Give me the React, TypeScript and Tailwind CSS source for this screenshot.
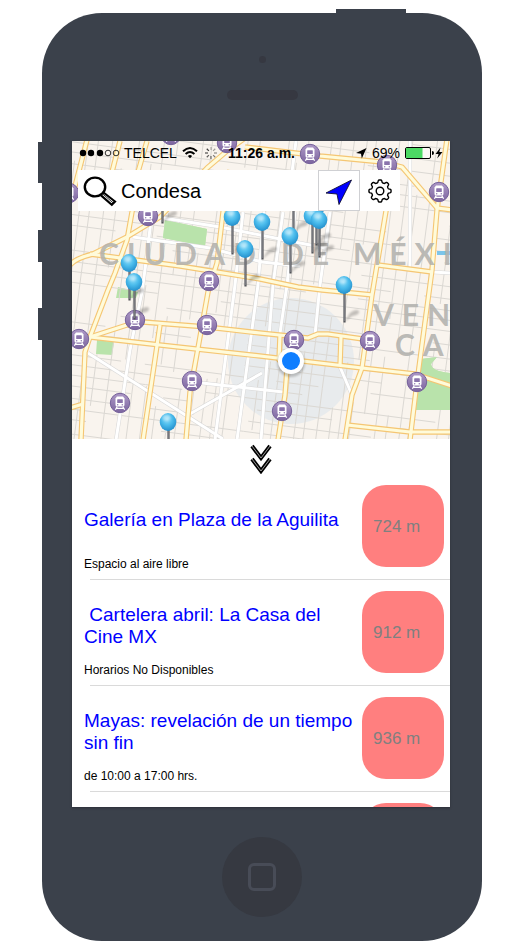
import React from "react";

const MAJOR_ROADS = [
  "M88 136 L74 190",
  "M120 141 L112 172",
  "M147 141 L138 172 L132 212 L127 240 L115 273 L108 290 L90 337 L85 352 L81 440",
  "M70 265 Q76 258 93 254 L127 237 L160 217 L207 168 L227 151 L245 138",
  "M90 254 L143 261 L180 266 L260 279 L298 287 L322 290 L373 295",
  "M230 170 L223 212 L217 263 L208 292 L198 348 L190 392 L186 440",
  "M90 337 L127 325 L143 322 L207 327 L260 333 L308 338 L318 334 L328 334 L370 340",
  "M90 337 L160 345 L260 356 L362 368 L415 374 L452 386",
  "M160 325 L154 366 L143 440",
  "M280 335 L279 360 L287 369 L285 395 L278 440",
  "M387 205 L372 295 L362 368 L352 395 L345 440",
  "M447 139 L437 210 L432 270 L417 382 L410 440",
  "M245 147 L320 156 L382 162 L402 167 L437 208 L452 210",
  "M378 265 L432 272",
  "M347 425 L410 432 L452 432",
  "M341 337 L340 366",
  "M70 408 L83 404",
];

const WHITE_ROADS = [
  "M88 353 L223 439",
  "M262 373 L188 415",
  "M142 292 L130 350 L116 440",
  "M243 212 L235 285 L215 440",
  "M264 212 L258 285 L237 440",
  "M202 383 L283 392",
  "M295 212 L287 285 L279 340",
  "M283 212 L273 285 L261 440",
  "M330 212 L320 285 L315 335",
  "M340 367 L352 395",
  "M410 141 L410 267",
  "M296 141 L292 172",
  "M163 218 L220 227 L300 243 L326 248",
  "M133 237 L210 248 L262 262 L300 266",
  "M152 212 L146 262 L142 292",
  "M432 272 L452 273",
];

const PARKS = [
  "M165 220 L207 229 L205 246 L163 238 Z",
  "M118 287 L138 292 L136 298 L116 298 Z",
  "M97 340 L114 342 L112 355 L96 354 Z",
  "M421 359 L437 357 L431 364 Q432 372 452 373 V410 H416 L420 372 Z",
];

const STATIONS = [
  [171, 135], [227, 143], [310, 154], [387, 165], [439, 192], [69, 193],
  [148, 216], [209, 281], [135, 320], [207, 325], [79, 339], [192, 381],
  [120, 403], [294, 340], [370, 341], [417, 382], [282, 411],
];

const PINS = [
  [162, 186], [293, 196], [316, 208], [232, 217], [262, 222], [290, 236],
  [312, 216], [319, 220], [245, 249], [129, 263], [134, 282], [344, 285],
  [168, 422],
];

const EVENTS = [
  { title: "Galería en Plaza de la Aguilita", detail: "Espacio al aire libre", distance: "724 m" },
  { title: "\u00a0Cartelera abril: La Casa del Cine MX", detail: "Horarios No Disponibles", distance: "912 m" },
  { title: "Mayas: revelación de un tiempo sin fin", detail: "de 10:00 a 17:00 hrs.", distance: "936 m" },
];

/* Side streets: two families of slightly tilted lines, broken at random blocks. */
function buildStreets() {
  let seed = 11;
  const rand = () => {
    seed = (seed * 16807) % 2147483647;
    return seed / 2147483647;
  };
  const parts: string[] = [];
  for (let x = 66; x < 500; x += 9 + rand() * 6) {
    for (let y = 136; y < 440; ) {
      const len = 20 + rand() * 55;
      if (rand() > 0.25) {
        const x1 = x - (y - 140) * 0.13;
        const x2 = x - (y + len - 140) * 0.13;
        parts.push(`M${x1.toFixed(1)} ${y.toFixed(1)} L${x2.toFixed(1)} ${(y + len).toFixed(1)}`);
      }
      y += len;
    }
  }
  for (let y = 90; y < 440; y += 9 + rand() * 6) {
    for (let x = 66; x < 450; ) {
      const len = 20 + rand() * 60;
      if (rand() > 0.26) {
        const y1 = y + (x - 72) * 0.13;
        const y2 = y + (x + len - 72) * 0.13;
        parts.push(`M${x.toFixed(1)} ${y1.toFixed(1)} L${(x + len).toFixed(1)} ${y2.toFixed(1)}`);
      }
      x += len;
    }
  }
  return parts.join(" ");
}

const STREETS = buildStreets();

function buildGear() {
  const points: string[] = [];
  for (let i = 0; i < 160; i++) {
    const a = (i / 160) * Math.PI * 2;
    const r = 9.8 + 1.3 * Math.tanh(2.2 * Math.cos(8 * a));
    points.push(`${(13 + r * Math.sin(a)).toFixed(2)} ${(13 - r * Math.cos(a)).toFixed(2)}`);
  }
  return `M${points.join(" L")} Z`;
}

const GEAR = buildGear();

function Station({ x, y }: { x: number; y: number }) {
  return (
    <g transform={`translate(${x} ${y})`}>
      <circle r="9.7" fill="url(#station)" stroke="#75609a" strokeWidth="1" />
      <path d="M-3 -6.4 H3 L4.5 -4.5 V2 Q4.500 3.6 2.8 3.6 H-2.8 Q-4.500 3.6 -4.5 2 V-4.5 Z" fill="#fff" />
      <rect x="-2.800" y="-3.800" width="5.600" height="3.800" rx="0.6" fill="#8b74ac" />
      <circle cx="-2.3" cy="1.7" r="0.7" fill="#8b74ac" />
      <circle cx="2.3" cy="1.7" r="0.7" fill="#8b74ac" />
      <path d="M-2.800 3.600 L-4.600 6.800 M2.800 3.600 L4.600 6.800 M-3.600 5.300 H3.600" stroke="#fff" strokeWidth="1.2" />
    </g>
  );
}

function Pin({ x, y }: { x: number; y: number }) {
  return (
    <g transform={`translate(${x} ${y})`}>
      <path d="M0.5 37 L6 28 Q12 23 15 26 Q16 30 8 31 Z" fill="#000" opacity="0.22" filter="url(#soft)" />
      <path d="M0.5 7 V37.5" stroke="#55565b" strokeWidth="2.2" />
      <path d="M0.2 8 V36" stroke="#9b9ca2" strokeWidth="0.7" />
      <ellipse rx="8.3" ry="9" fill="url(#ball)" />
      <ellipse cx="-1.6" cy="-4.2" rx="4" ry="3" fill="#fff" opacity="0.4" filter="url(#soft)" />
    </g>
  );
}

function CityMap() {
  return (
    <svg
      className="absolute inset-0 h-full w-full"
      viewBox="72 141 378 298"
      preserveAspectRatio="xMidYMid slice"
      role="img"
      aria-label="Mapa"
    >
      <defs>
        <linearGradient id="station" x1="0" y1="0" x2="0" y2="1">
          <stop offset="0" stopColor="#ad98c6" />
          <stop offset="1" stopColor="#7c659f" />
        </linearGradient>
        <radialGradient id="ball" cx="0.45" cy="0.35" r="0.65">
          <stop offset="0" stopColor="#8fdcf8" />
          <stop offset="0.5" stopColor="#4bbcec" />
          <stop offset="1" stopColor="#2490cd" />
        </radialGradient>
        <filter id="soft" x="-50%" y="-50%" width="200%" height="200%">
          <feGaussianBlur stdDeviation="1" />
        </filter>
      </defs>
      <rect x="60" y="130" width="400" height="320" fill="#f9f4ee" />
      <g fill="#b9e3ab">
        {PARKS.map((d) => (
          <path key={d} d={d} />
        ))}
      </g>
      <circle cx="291" cy="361" r="63" fill="#dfe7ec" opacity="0.65" />
      <path d={STREETS} stroke="#dbd8d3" strokeWidth="1" fill="none" />
      <g fill="#b9e3ab">
        <path d={PARKS[0]} />
        <path d={PARKS[3]} />
      </g>
      <g fill="none" strokeLinejoin="round">
        {WHITE_ROADS.map((d) => (
          <path key={d} d={d} stroke="#d8d8d8" strokeWidth="4" />
        ))}
        {WHITE_ROADS.map((d) => (
          <path key={d} d={d} stroke="#fff" strokeWidth="3" />
        ))}
        {MAJOR_ROADS.map((d) => (
          <path key={d} d={d} stroke="#f5c673" strokeWidth="5.4" />
        ))}
        {MAJOR_ROADS.map((d) => (
          <path key={d} d={d} stroke="#fffbda" strokeWidth="3.2" />
        ))}
      </g>
      <path d="M437 253 H452" stroke="#7cc5ea" strokeWidth="4" fill="none" />
      <g className="font-['Lato','Open_Sans',sans-serif] text-[30px] font-bold" fill="#b3b2ae" fillOpacity="0.9">
        <text x="99" y="265" className="tracking-[8px]">CIUDAD</text>
        <text x="281" y="265" className="tracking-[8px]">DE</text>
        <text x="353" y="265" className="tracking-[8px]">MÉXI</text>
        <text x="373" y="326" className="tracking-[8px]">VEN</text>
        <text x="395" y="356" className="tracking-[8px]">CA</text>
      </g>
      {STATIONS.map(([x, y]) => (
        <Station key={`${x}-${y}`} x={x} y={y} />
      ))}
      {PINS.map(([x, y]) => (
        <Pin key={`${x}-${y}`} x={x} y={y} />
      ))}
      <circle cx="291" cy="363" r="14" fill="#000" opacity="0.2" filter="url(#soft)" />
      <circle cx="291" cy="361" r="13" fill="#fff" />
      <circle cx="291" cy="361" r="9" fill="#0f7eff" />
    </svg>
  );
}

function StatusBar() {
  return (
    <div className="relative flex h-[29px] items-start pt-1 pl-[7px] pr-[6px] text-[14px] leading-4 text-black">
      <div className="flex flex-1 items-center">
        <svg className="h-4 w-[42px]" viewBox="0 0 42 16" aria-hidden="true">
          {[4, 12, 21, 29, 37].map((x, i) => (
            <circle key={x} cx={x} cy="8" r={i < 3 ? 3.2 : 2.8} fill={i < 3 ? "#000" : "none"} stroke="#000" strokeWidth={i < 3 ? 0 : 0.8} />
          ))}
        </svg>
        <span className="ml-[3px]">TELCEL</span>
        <svg className="ml-[5px] h-4 w-4" viewBox="0 0 16 16" fill="none" stroke="#000" strokeWidth="2" aria-hidden="true">
          <path d="M1 6.2 Q8 -0.2 15 6.2" />
          <path d="M3.6 9 Q8 5 12.4 9" />
          <path d="M5.9 10.9 Q8 9.2 10.1 10.9 L8 13.2 Z" fill="#000" stroke="none" />
        </svg>
        <svg className="ml-[6px] h-4 w-[14px]" viewBox="0 0 14 16" stroke="#000" strokeWidth="1.2" aria-hidden="true">
          {[0, 45, 90, 135, 180, 225, 270, 315].map((a) => (
            <path key={a} d="M7 5 V2" transform={`rotate(${a} 7 8)`} opacity={0.3 + a / 700} />
          ))}
        </svg>
      </div>
      <span className="font-bold">11:26 a.m.</span>
      <div className="flex flex-1 items-center justify-end">
        <svg className="h-4 w-3" viewBox="0 0 12 16" aria-hidden="true">
          <path d="M11.5 3 L1 8 L6 8.8 L6.8 13.6 Z" fill="#000" />
        </svg>
        <span className="ml-[5px]">69%</span>
        <svg className="ml-1 h-4 w-10" viewBox="0 0 40 16" aria-hidden="true">
          <rect x="1.5" y="2.5" width="25" height="11" rx="1.5" fill="#fff" fillOpacity="0.4" stroke="#000" strokeWidth="1" />
          <rect x="2" y="3" width="16.5" height="10" fill="#4cd964" />
          <path d="M28 6 Q30 6 30 8 Q30 10 28 10 Z" fill="#000" />
          <path d="M36.5 2.5 L31.500 9 H34.600 L33.200 13.500 L38.500 7 H35.300 Z" fill="#000" />
        </svg>
      </div>
    </div>
  );
}

function SearchBar() {
  return (
    <form className="relative mr-[50px] ml-[6px] flex h-[41px] items-stretch bg-white">
      <label htmlFor="search" className="flex items-center pl-[5px]">
        <span className="sr-only">Buscar</span>
        <svg className="h-8 w-[34px]" viewBox="0 0 34 32" fill="none" stroke="#000" aria-hidden="true">
          <ellipse cx="12" cy="12" rx="10.2" ry="9.4" strokeWidth="2.4" />
          <path d="M20.500 17.500 L32 26.500 L28.800 29.800 L18 20.400" strokeWidth="2.2" />
          <path d="M20 19.200 L30.500 28.200" strokeWidth="0.8" />
        </svg>
      </label>
      <input
        id="search"
        type="text"
        defaultValue="Condesa"
        className="min-w-0 flex-1 bg-transparent pl-1 text-[20px] text-black outline-none"
      />
      <button type="button" aria-label="Mi ubicación" className="flex w-[42px] items-center justify-center border border-[#cfd0d3]">
        <svg className="h-7 w-7" viewBox="0 0 28 28" aria-hidden="true">
          <path d="M26.500 3 L1 16 L12 17 L14 27.500 Z" fill="#0000ff" stroke="#111133" strokeWidth="0.9" />
        </svg>
      </button>
      <button type="button" aria-label="Ajustes" className="flex w-10 items-center justify-center">
        <svg className="h-[26px] w-[26px]" viewBox="0 0 26 26" fill="none" stroke="#000" strokeWidth="1.4" aria-hidden="true">
          <path d={GEAR} />
          <circle cx="13" cy="13" r="3.8" />
        </svg>
      </button>
    </form>
  );
}

function Chevrons() {
  const d = "M2 3 L11 15 L20 3 M2 16 L11 28 L20 16";
  return (
    <svg className="h-[31px] w-[22px]" viewBox="0 0 22 31" fill="none" aria-hidden="true">
      <path d={d} stroke="#000" strokeWidth="4" />
      <path d={d} stroke="#c0c0c0" strokeWidth="0.8" />
    </svg>
  );
}

function SideButtons() {
  return (
    <div aria-hidden="true" className="absolute top-[129px] -left-1 flex w-1 flex-col">
      <div className="h-[41px] bg-[#3b414b]" />
      <div className="mt-[47px] h-8 bg-[#3b414b]" />
      <div className="mt-[46px] h-8 bg-[#3b414b]" />
    </div>
  );
}

export default function App() {
  return (
    <main className="mx-auto w-full max-w-[520px] bg-white pt-[13px] pr-[38px] pb-[9px] pl-[42px] font-['Liberation_Sans',Arial,sans-serif]">
      <div className="relative rounded-[60px] bg-[#3b414b] pr-8 pl-[30px]">
        <div aria-hidden="true" className="absolute -top-1 right-[76px] h-1 w-[70px] bg-[#3b414b]" />
        <SideButtons />
        <div aria-hidden="true" className="-mr-[2px] flex h-32 flex-col items-center pt-[43px]">
          <div className="h-[7px] w-[7px] rounded-full bg-[#363841]" />
          <div className="mt-[27px] h-[10px] w-[71px] rounded-full bg-[#363841]" />
        </div>

        <div className="flex aspect-[378/666] w-full flex-col overflow-hidden bg-white shadow-[0_1px_2px_#2c3038]">
          <section className="relative h-[298px] shrink-0 overflow-hidden">
            <CityMap />
            <StatusBar />
            <SearchBar />
          </section>

          <button type="button" aria-label="Ocultar mapa" className="flex h-[35px] shrink-0 items-end justify-center">
            <Chevrons />
          </button>

          <ul>
            {EVENTS.map((event) => (
              <li key={event.title}>
                <div className="flex h-[105px] pr-[6px] pl-3">
                  <div className="flex min-w-0 flex-1 flex-col">
                    <div className="flex h-[82px] items-center pt-[10px]">
                      <a href="#" className="text-[19px] leading-[22px] text-[#0000ff]">{event.title}</a>
                    </div>
                    <p className="text-[12px] leading-4 text-black">{event.detail}</p>
                  </div>
                  <div className="mt-[11px] flex h-[82px] w-[82px] shrink-0 items-center rounded-3xl bg-[#ff7f7f] pt-[2px] pl-[11px] text-[17px] text-[#808080]">
                    {event.distance}
                  </div>
                </div>
                <div className="ml-[18px] h-px bg-[#dadada]" />
              </li>
            ))}
            <li className="flex h-[105px] justify-end pr-[6px]">
              <div className="mt-[11px] h-[82px] w-[82px] rounded-3xl bg-[#ff7f7f]" />
            </li>
          </ul>
        </div>

        <div className="-mr-[2px] flex h-[134px] justify-center pt-[30px]">
          <button type="button" aria-label="Inicio" className="flex h-20 w-20 items-center justify-center rounded-full bg-[#363941]">
            <span className="h-7 w-7 rounded-[6px] border-3 border-[#484c57]" />
          </button>
        </div>
      </div>
    </main>
  );
}
